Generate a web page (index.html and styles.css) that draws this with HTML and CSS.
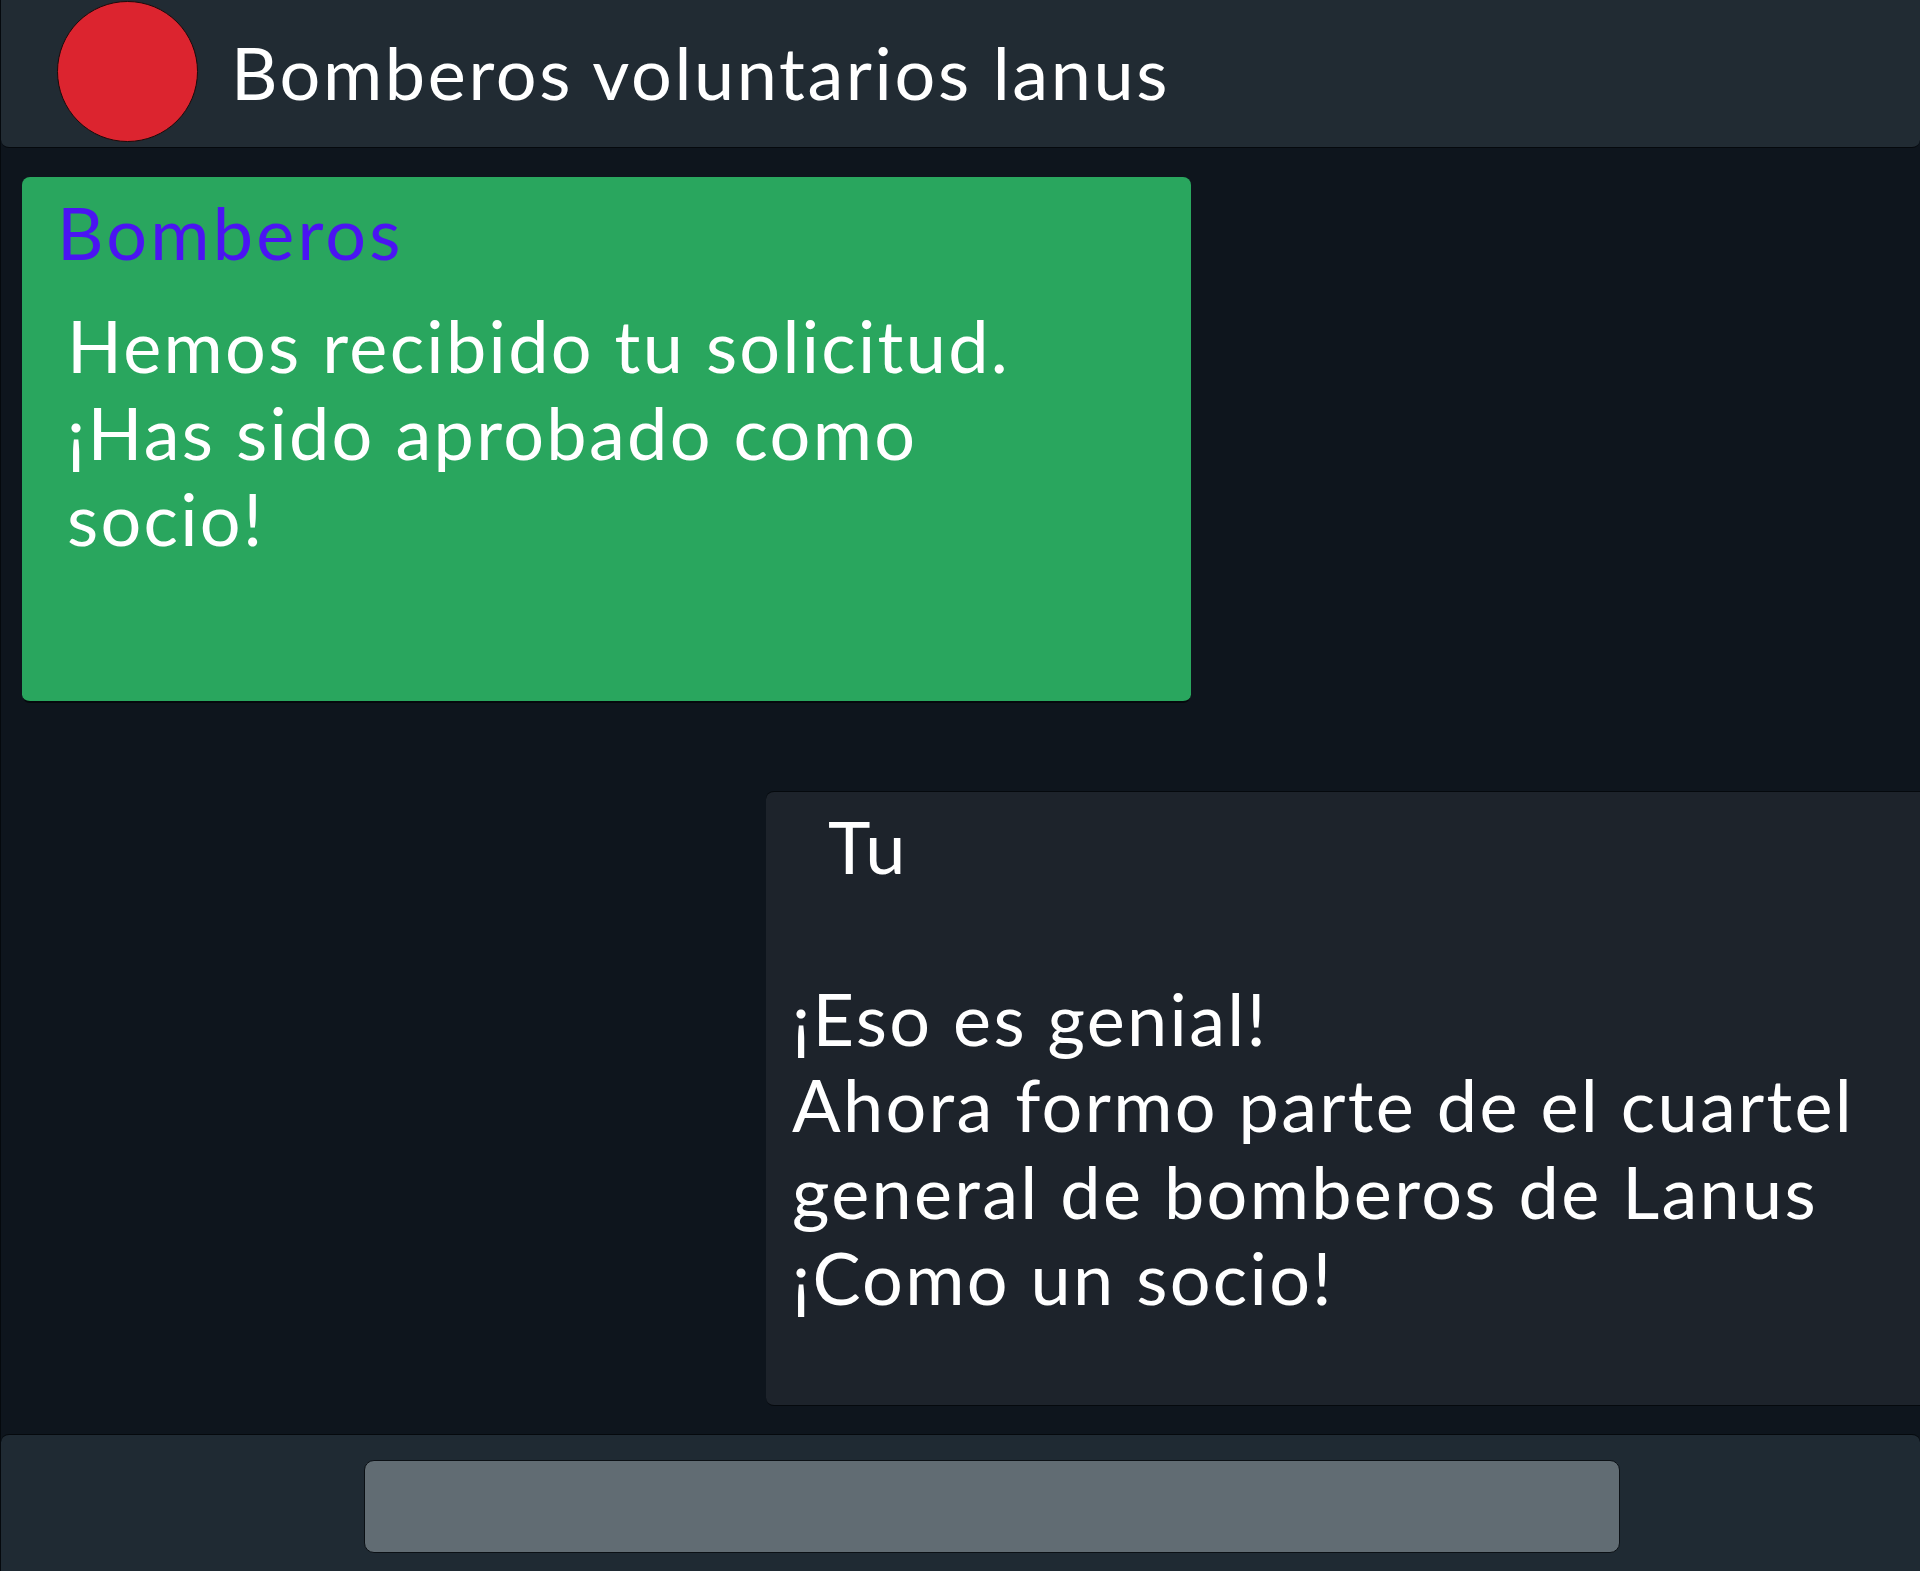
FILE: index.html
```html
<!DOCTYPE html>
<html lang="es">
<head>
<meta charset="utf-8">
<title>Bomberos voluntarios lanus</title>
<link rel="stylesheet" href="styles.css">
</head>
<body>
<div class="app">
  <header class="chat-header">
    <div class="avatar"></div>
    <h1 class="chat-title">Bomberos voluntarios lanus</h1>
  </header>
  <main class="chat-body">
    <div class="msg msg-in">
      <div class="msg-author">Bomberos</div>
      <p class="msg-text">Hemos recibido tu solicitud.<br>¡Has sido aprobado como<br>socio!</p>
    </div>
    <div class="msg msg-out">
      <div class="msg-author">Tu</div>
      <p class="msg-text">¡Eso es genial!<br>Ahora formo parte de el cuartel<br>general de bomberos de Lanus<br>¡Como un socio!</p>
    </div>
  </main>
  <footer class="chat-footer">
    <div class="chat-input"></div>
  </footer>
</div>
</body>
</html>
```

FILE: styles.css
```css
* { box-sizing: border-box; }

html, body {
  margin: 0;
  padding: 0;
  height: 100%;
}

body {
  background: #0e151d;
  font-family: "Lato", "Open Sans", sans-serif;
  color: #ffffff;
  overflow: hidden;
}

.app {
  display: flex;
  flex-direction: column;
  height: 1571px;
  border-left: 1px solid #05090d;
}

.chat-header {
  display: flex;
  align-items: flex-start;
  height: 148px;
  padding: 1px 0 0 56px;
  background: #212b33;
  border-bottom: 1px solid #05090d;
  border-radius: 0 0 8px 8px;
  flex-shrink: 0;
}

.avatar {
  width: 141px;
  height: 141px;
  border-radius: 50%;
  background: #dc242f;
  border: 1px solid #1a0a0a;
  flex-shrink: 0;
}

.chat-title {
  margin: 28px 0 0 33px;
  font-size: 72px;
  font-weight: 400;
  line-height: 1.2;
  letter-spacing: 2.6px;
  color: #ffffff;
}

.chat-body {
  flex: 1;
  display: flex;
  flex-direction: column;
  align-items: flex-start;
  padding: 29px 0 0 21px;
  overflow: hidden;
}

.msg {
  border-radius: 8px;
  font-size: 72px;
  line-height: 1.2;
  letter-spacing: 2.3px;
}

.msg-text {
  margin: 0;
}

.msg-in {
  width: 1169px;
  background: #29a65e;
  border-bottom: 2px solid #05090d;
  padding: 12px 0 139px 35px;
}

.msg-in .msg-author {
  color: #4b14f2;
  letter-spacing: 3.2px;
}

.msg-in .msg-text {
  margin-top: 27px;
  padding-left: 10px;
}

.msg-out {
  width: 1200px;
  margin-top: 88px;
  margin-left: 744px;
  background: #1d232b;
  border-top: 1px solid #05090d;
  border-bottom: 1px solid #05090d;
  padding: 11px 0 84px 26px;
}

.msg-out .msg-author {
  padding-left: 36px;
}

.msg-out .msg-text {
  margin-top: 86px;
}

.chat-footer {
  height: 137px;
  flex-shrink: 0;
  background: #1f2a33;
  border-top: 1px solid #05090d;
  border-radius: 8px 8px 0 0;
  padding: 25px 0 0 363px;
}

.chat-input {
  width: 1256px;
  height: 93px;
  background: #616c73;
  border: 1px solid #0b1015;
  border-radius: 10px;
}
```
